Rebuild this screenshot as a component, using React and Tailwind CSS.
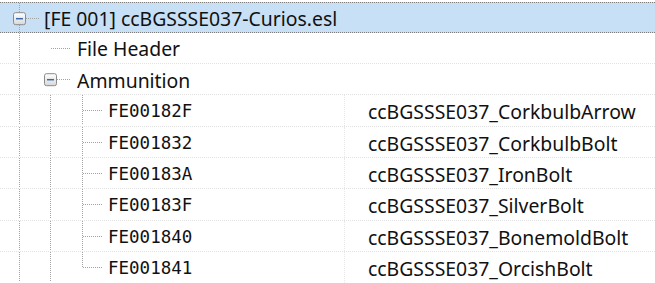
import React from "react";

const LINE = "#a3a3a3";
const X = [19.5, 50.5, 82.5];
const TEXT_X = [44, 77, 108];

const items = [
  { level: 1, label: "File Header" },
  { level: 1, label: "Ammunition", open: true },
  { level: 2, code: "FE00182F", name: "ccBGSSSE037_CorkbulbArrow" },
  { level: 2, code: "FE001832", name: "ccBGSSSE037_CorkbulbBolt" },
  { level: 2, code: "FE00183A", name: "ccBGSSSE037_IronBolt" },
  { level: 2, code: "FE00183F", name: "ccBGSSSE037_SilverBolt" },
  { level: 2, code: "FE001840", name: "ccBGSSSE037_BonemoldBolt" },
  { level: 2, code: "FE001841", name: "ccBGSSSE037_OrcishBolt", last: true },
];

function Expander({ cx }) {
  return (
    <g>
      <defs>
        <linearGradient id="exp" x1="0" y1="0" x2="0" y2="1">
          <stop offset="0" stopColor="#ffffff" />
          <stop offset="1" stopColor="#d8d8d8" />
        </linearGradient>
      </defs>
      <rect x={cx - 6} y="9.7" width="12" height="12" rx="2" fill="url(#exp)" stroke="#8a8a8a" />
      <line x1={cx - 3.5} x2={cx + 3.5} y1="15.7" y2="15.7" stroke="#3b67ad" strokeWidth="1.5" />
    </g>
  );
}

// dotted guide lines of the tree for one row
function Guides({ level, open, last, root }) {
  const x = X[level];
  const dot = { stroke: LINE, strokeDasharray: "1 1", shapeRendering: "crispEdges" };
  return (
    <svg width={TEXT_X[level]} className="h-full shrink-0">
      {X.slice(0, level).map((ax) => (
        <line key={ax} x1={ax} x2={ax} y1="0" y2="100%" {...dot} />
      ))}
      {root && <line x1={x} x2={x} y1="0" y2="100%" {...dot} />}
      {level === 2 && <line x1={x} x2={x} y1="0" y2={last ? "50%" : "100%"} {...dot} />}
      <line x1={x} x2={x + 20} y1="15.5" y2="15.5" {...dot} />
      {(open || root) && <Expander cx={x} />}
    </svg>
  );
}

export default function App() {
  return (
    <div
      className="w-[655px] h-[283px] bg-white overflow-hidden pt-[2px] text-[#111]"
      style={{ fontFamily: '"Noto Sans", "Open Sans", sans-serif' }}
    >
      <div className="flex h-[30.5px] items-center bg-[#c8e0f6] border-y border-dotted border-[#7c7c7c]">
        <Guides level={0} root />
        <span className="mt-[2px] text-[19.4px] leading-none whitespace-nowrap">[FE 001] ccBGSSSE037-Curios.esl</span>
      </div>
      {items.map((it, i) => (
        <div key={i} className="flex h-[31.4px] items-center border-b border-dotted border-[#e2e2e2]">
          <Guides level={it.level} open={it.open} last={it.last} />
          {it.level === 1 ? (
            <span className="mt-[3px] text-[19.4px] leading-none whitespace-nowrap">{it.label}</span>
          ) : (
            <>
              <div className="w-[237px] h-full flex items-center border-r border-dotted border-[#e8e8e8]">
                <span
                  className="mt-[3px] text-[17.5px] leading-none"
                  style={{ fontFamily: '"DejaVu Sans Mono", monospace' }}
                >
                  {it.code}
                </span>
              </div>
              <span className="mt-[3px] pl-[23px] text-[19.4px] leading-none whitespace-nowrap">{it.name}</span>
            </>
          )}
        </div>
      ))}
    </div>
  );
}
